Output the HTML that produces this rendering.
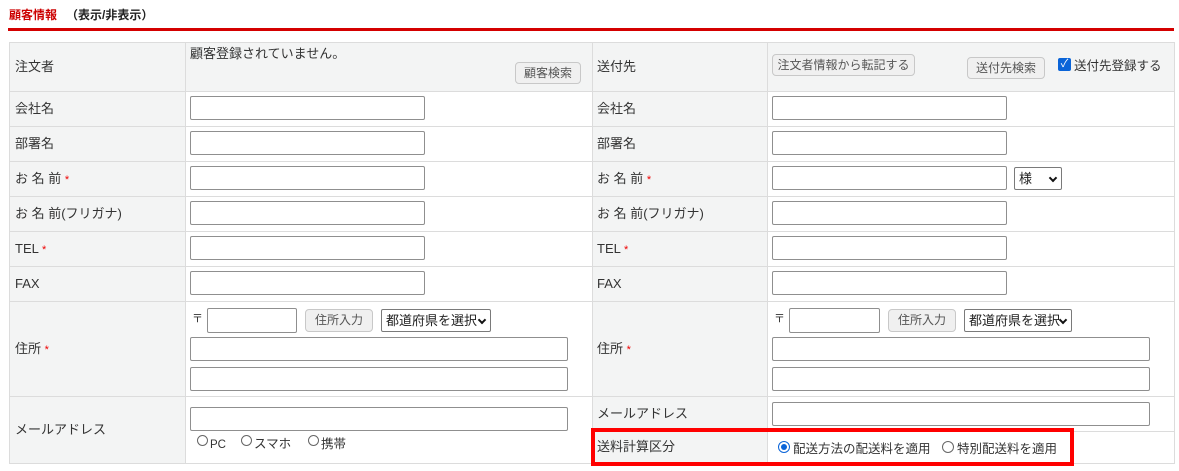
<!DOCTYPE html>
<html><head><meta charset="utf-8"><style>
body{margin:0;width:1179px;height:471px;background:#fff;position:relative;overflow:hidden;font-family:"Liberation Sans","Noto Sans CJK JP",sans-serif;font-size:13px;color:#333}
div,span{position:absolute;box-sizing:border-box}
.lbl{background:#f3f4f4}
.g{background:#f3f4f4}
.h{height:1px;background:#dcdcdc}
.v{width:1px;background:#dcdcdc}
.t{white-space:nowrap;line-height:16px}
.in{border:1px solid #8f8f8f;border-radius:2px;background:#fff;height:24px}
.btn{border:1px solid #c8c8c8;border-radius:4px;background:#f0f0f0;color:#555;font-size:12px;text-align:center;white-space:nowrap}
.sel{border:1px solid #7a7a7a;border-radius:2px;background:#fff;height:23px;font-size:13px;color:#222;line-height:21px;padding-left:4px;white-space:nowrap}
.r{color:#e00;font-size:11px}
.rad{width:11px;height:11px;border:1px solid #666;border-radius:50%;background:#fff}
.cv{position:absolute;right:5px;top:7px;width:6px;height:6px;border-right:2px solid #111;border-bottom:2px solid #111;transform:rotate(45deg)}
</style></head><body>
<div class="t" style="left:9px;top:7px;font-size:12px;font-weight:bold;color:#c00">顧客情報</div>
<div class="t" style="left:66px;top:7px;font-size:12px;font-weight:bold;color:#222">（表示/非表示）</div>
<div style="left:8px;top:28px;width:1166px;height:3px;background:#d40000"></div>

<div class="lbl" style="left:9px;top:42px;width:176px;height:421px"></div>
<div class="lbl" style="left:592px;top:42px;width:175px;height:421px"></div>
<div class="g" style="left:185px;top:42px;width:407px;height:49px"></div>
<div class="g" style="left:767px;top:42px;width:407px;height:49px"></div>

<div class="h" style="left:9px;top:42px;width:1166px"></div>
<div class="h" style="left:9px;top:91px;width:1166px"></div>
<div class="h" style="left:9px;top:126px;width:1166px"></div>
<div class="h" style="left:9px;top:161px;width:1166px"></div>
<div class="h" style="left:9px;top:196px;width:1166px"></div>
<div class="h" style="left:9px;top:231px;width:1166px"></div>
<div class="h" style="left:9px;top:266px;width:1166px"></div>
<div class="h" style="left:9px;top:301px;width:1166px"></div>
<div class="h" style="left:9px;top:396px;width:1166px"></div>
<div class="h" style="left:592px;top:431px;width:583px"></div>
<div class="h" style="left:9px;top:463px;width:1166px"></div>
<div class="v" style="left:9px;top:42px;height:422px"></div>
<div class="v" style="left:185px;top:42px;height:422px"></div>
<div class="v" style="left:592px;top:42px;height:422px"></div>
<div class="v" style="left:767px;top:42px;height:422px"></div>
<div class="v" style="left:1174px;top:42px;height:422px"></div>

<div class="t" style="left:15px;top:59px">注文者</div>
<div class="t" style="left:15px;top:101px">会社名</div>
<div class="t" style="left:15px;top:136px">部署名</div>
<div class="t" style="left:15px;top:171px">お 名 前 <span class="r" style="position:static">*</span></div>
<div class="t" style="left:15px;top:206px">お 名 前(フリガナ)</div>
<div class="t" style="left:15px;top:241px">TEL <span class="r" style="position:static">*</span></div>
<div class="t" style="left:15px;top:276px">FAX</div>
<div class="t" style="left:15px;top:341px">住所 <span class="r" style="position:static">*</span></div>
<div class="t" style="left:15px;top:422px">メールアドレス</div>

<div class="t" style="left:597px;top:59px">送付先</div>
<div class="t" style="left:597px;top:101px">会社名</div>
<div class="t" style="left:597px;top:136px">部署名</div>
<div class="t" style="left:597px;top:171px">お 名 前 <span class="r" style="position:static">*</span></div>
<div class="t" style="left:597px;top:206px">お 名 前(フリガナ)</div>
<div class="t" style="left:597px;top:241px">TEL <span class="r" style="position:static">*</span></div>
<div class="t" style="left:597px;top:276px">FAX</div>
<div class="t" style="left:597px;top:341px">住所 <span class="r" style="position:static">*</span></div>
<div class="t" style="left:597px;top:406px">メールアドレス</div>
<div class="t" style="left:597px;top:439px">送料計算区分</div>

<div class="t" style="left:190px;top:46px">顧客登録されていません。</div>
<div class="btn" style="left:515px;top:62px;width:66px;height:22px;line-height:20px">顧客検索</div>
<div class="btn" style="left:772px;top:54px;width:143px;height:22px;line-height:20px">注文者情報から転記する</div>
<div class="btn" style="left:967px;top:57px;width:78px;height:22px;line-height:20px">送付先検索</div>
<div style="left:1058px;top:58px;width:13px;height:13px;background:#0a64d8;border-radius:2px;color:#fff;font-size:11px;line-height:13px;text-align:center">✓</div>
<div class="t" style="left:1074px;top:58px;font-size:12.5px">送付先登録する</div>

<div class="in" style="left:190px;top:96px;width:235px"></div>
<div class="in" style="left:190px;top:131px;width:235px"></div>
<div class="in" style="left:190px;top:166px;width:235px"></div>
<div class="in" style="left:190px;top:201px;width:235px"></div>
<div class="in" style="left:190px;top:236px;width:235px"></div>
<div class="in" style="left:190px;top:271px;width:235px"></div>
<div class="in" style="left:772px;top:96px;width:235px"></div>
<div class="in" style="left:772px;top:131px;width:235px"></div>
<div class="in" style="left:772px;top:166px;width:235px"></div>
<div class="sel" style="left:1014px;top:167px;width:48px">様<span class="cv"></span></div>
<div class="in" style="left:772px;top:201px;width:235px"></div>
<div class="in" style="left:772px;top:236px;width:235px"></div>
<div class="in" style="left:772px;top:271px;width:235px"></div>

<div class="t" style="left:192px;top:311px;font-size:11px">〒</div>
<div class="in" style="left:207px;top:308px;width:90px;height:25px"></div>
<div class="btn" style="left:305px;top:309px;width:68px;height:23px;line-height:21px">住所入力</div>
<div class="sel" style="left:381px;top:309px;width:110px">都道府県を選択<span class="cv"></span></div>
<div class="in" style="left:190px;top:337px;width:378px"></div>
<div class="in" style="left:190px;top:367px;width:378px"></div>
<div class="t" style="left:774px;top:311px;font-size:11px">〒</div>
<div class="in" style="left:789px;top:308px;width:91px;height:25px"></div>
<div class="btn" style="left:888px;top:309px;width:68px;height:23px;line-height:21px">住所入力</div>
<div class="sel" style="left:964px;top:309px;width:108px">都道府県を選択<span class="cv"></span></div>
<div class="in" style="left:772px;top:337px;width:378px"></div>
<div class="in" style="left:772px;top:367px;width:378px"></div>

<div class="in" style="left:190px;top:407px;width:378px"></div>
<div class="rad" style="left:197px;top:435px"></div>
<div class="t" style="left:210px;top:437px;font-size:11.5px">PC</div>
<div class="rad" style="left:241px;top:435px"></div>
<div class="t" style="left:254px;top:436px;font-size:12.5px">スマホ</div>
<div class="rad" style="left:308px;top:435px"></div>
<div class="t" style="left:321px;top:436px;font-size:12.5px">携帯</div>
<div class="in" style="left:772px;top:402px;width:378px"></div>

<div style="left:778px;top:441px;width:12px;height:12px;border-radius:50%;border:1px solid #0a64d8;background:#fff"><span style="left:2px;top:2px;width:6px;height:6px;border-radius:50%;background:#0a64d8"></span></div>
<div class="t" style="left:793px;top:441px;font-size:12.5px">配送方法の配送料を適用</div>
<div class="rad" style="left:942px;top:441px;width:12px;height:12px"></div>
<div class="t" style="left:957px;top:441px;font-size:12.5px">特別配送料を適用</div>
<div style="left:591px;top:428px;width:483px;height:38px;border:4px solid #f00"></div>
</body></html>
